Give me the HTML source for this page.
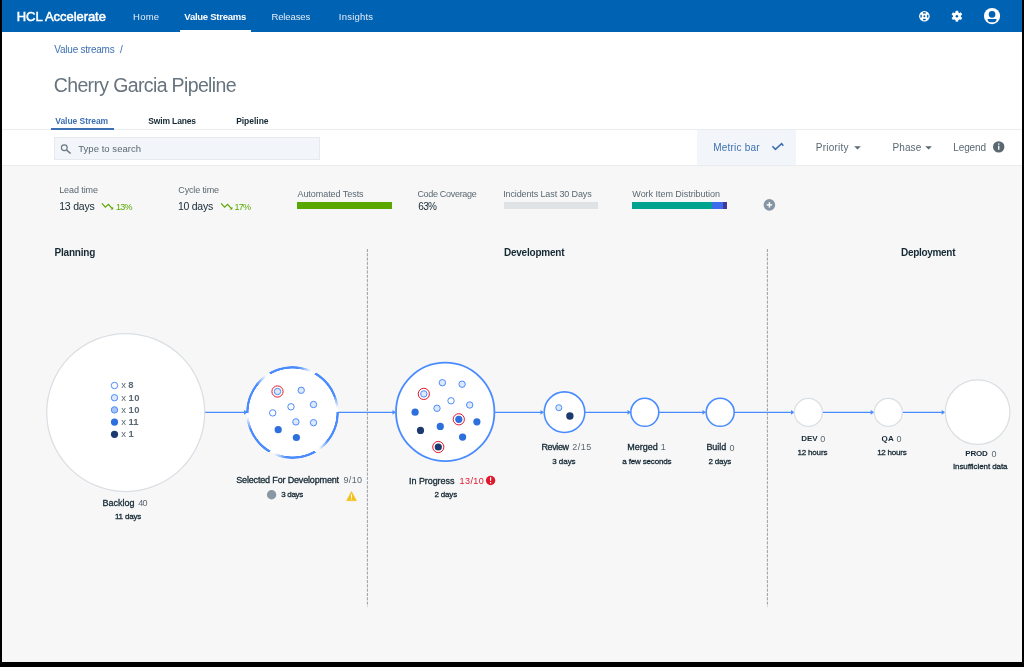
<!DOCTYPE html>
<html><head><meta charset="utf-8"><style>
html,body{margin:0;padding:0;}
body{width:1024px;height:667px;background:#000;position:relative;overflow:hidden;font-family:"Liberation Sans", sans-serif;}
#app{position:absolute;left:2px;top:0;width:1020px;height:662px;background:#f7f7f7;}
.t{position:absolute;white-space:nowrap;line-height:1;}
.a{position:absolute;}
</style></head><body>
<div id="app"></div>
<div class="a" style="left:2px;top:0;width:1020px;height:32px;background:#0062b3"></div>
<div class="a" style="left:180px;top:30px;width:71px;height:2px;background:#fff"></div>
<div class="a" style="left:2px;top:32px;width:1020px;height:133px;background:#fff"></div>
<div class="a" style="left:2px;top:129px;width:1020px;height:1px;background:#eaedf0"></div>
<div class="a" style="left:51px;top:128px;width:63px;height:2px;background:#3d70b2"></div>
<div class="a" style="left:2px;top:165px;width:1020px;height:1px;background:#eaedf0"></div>
<div class="a" style="left:54px;top:137px;width:264px;height:21px;background:#f2f5f9;border:1px solid #e6e9ed"></div>
<div class="a" style="left:697px;top:130px;width:99px;height:35px;background:#f2f5f9"></div>
<div class="a" style="left:297px;top:202px;width:95px;height:7px;background:#5aa700"></div>
<div class="a" style="left:504px;top:202px;width:94px;height:7px;background:#dfe3e6"></div>
<div class="a" style="left:632px;top:202px;width:80px;height:7px;background:#00a38d"></div>
<div class="a" style="left:712px;top:202px;width:11px;height:7px;background:#3d6beb"></div>
<div class="a" style="left:723px;top:202px;width:4px;height:7px;background:#44389a"></div>
<svg class="a" style="left:0;top:0" width="1024" height="667" viewBox="0 0 1024 667"><line x1="205" y1="412.3" x2="244.5" y2="412.3" stroke="#4a8cff" stroke-width="1.3"/><path d="M244.0 409.90000000000003 L247.5 412.3 L244.0 414.7 Z" fill="#4a8cff"/><line x1="337.5" y1="412.3" x2="393" y2="412.3" stroke="#4a8cff" stroke-width="1.3"/><path d="M392.5 409.90000000000003 L396 412.3 L392.5 414.7 Z" fill="#4a8cff"/><line x1="495" y1="412.3" x2="541" y2="412.3" stroke="#4a8cff" stroke-width="1.3"/><path d="M540.5 409.90000000000003 L544 412.3 L540.5 414.7 Z" fill="#4a8cff"/><line x1="585" y1="412.3" x2="628" y2="412.3" stroke="#4a8cff" stroke-width="1.3"/><path d="M627.5 409.90000000000003 L631 412.3 L627.5 414.7 Z" fill="#4a8cff"/><line x1="659" y1="412.3" x2="703" y2="412.3" stroke="#4a8cff" stroke-width="1.3"/><path d="M702.5 409.90000000000003 L706 412.3 L702.5 414.7 Z" fill="#4a8cff"/><line x1="734.4" y1="412.3" x2="791.5" y2="412.3" stroke="#4a8cff" stroke-width="1.3"/><path d="M791.0 409.90000000000003 L794.5 412.3 L791.0 414.7 Z" fill="#4a8cff"/><line x1="822.2" y1="412.3" x2="871.2" y2="412.3" stroke="#4a8cff" stroke-width="1.3"/><path d="M870.7 409.90000000000003 L874.2 412.3 L870.7 414.7 Z" fill="#4a8cff"/><line x1="902.3" y1="412.3" x2="942.2" y2="412.3" stroke="#4a8cff" stroke-width="1.3"/><path d="M941.7 409.90000000000003 L945.2 412.3 L941.7 414.7 Z" fill="#4a8cff"/><line x1="367.4" y1="249" x2="367.4" y2="606.5" stroke="#979ea4" stroke-width="1" stroke-dasharray="3 1.3"/><line x1="767.4" y1="249" x2="767.4" y2="606.5" stroke="#979ea4" stroke-width="1" stroke-dasharray="3 1.3"/><circle cx="125.7" cy="412.5" r="79" fill="#fff" stroke="#dadfe4" stroke-width="1.25"/><circle cx="808.4" cy="412.4" r="14" fill="#fff" stroke="#dadfe4" stroke-width="1.25"/><circle cx="888.3" cy="412.4" r="14" fill="#fff" stroke="#dadfe4" stroke-width="1.25"/><circle cx="977.6" cy="412.1" r="32.3" fill="#fff" stroke="#dadfe4" stroke-width="1.25"/><circle cx="445.2" cy="411.9" r="49.2" fill="#fff" stroke="#4a8cff" stroke-width="1.8"/><circle cx="564.5" cy="412.2" r="20.3" fill="#fff" stroke="#4a8cff" stroke-width="1.6"/><circle cx="644.8" cy="412.3" r="14" fill="#fff" stroke="#4a8cff" stroke-width="1.6"/><circle cx="720.2" cy="412.3" r="14" fill="#fff" stroke="#4a8cff" stroke-width="1.6"/><circle cx="292.5" cy="412.2" r="45.5" fill="#fff"/><circle cx="114.5" cy="385.5" r="3.2" fill="#fff" stroke="#4a8cff" stroke-width="1"/><circle cx="114.5" cy="397.7" r="3.2" fill="#dde8fa" stroke="#4a8cff" stroke-width="1"/><circle cx="114.5" cy="409.9" r="3.2" fill="#a9c3f5" stroke="#4a8cff" stroke-width="1"/><circle cx="114.5" cy="422.1" r="3.6" fill="#2d6fdd"/><circle cx="114.5" cy="434.3" r="3.6" fill="#1d3a70"/><circle cx="277.5" cy="391.5" r="3.2" fill="#dde8fa" stroke="#4a8cff" stroke-width="1"/><circle cx="277.5" cy="391.5" r="5.6" fill="none" stroke="#e0182d" stroke-width="1"/><circle cx="301.2" cy="390.3" r="3.2" fill="#dde8fa" stroke="#4a8cff" stroke-width="1"/><circle cx="313.5" cy="404.5" r="3.2" fill="#dde8fa" stroke="#4a8cff" stroke-width="1"/><circle cx="291" cy="406.8" r="3.2" fill="#fff" stroke="#4a8cff" stroke-width="1"/><circle cx="272.7" cy="412.9" r="3.2" fill="#fff" stroke="#4a8cff" stroke-width="1"/><circle cx="295.9" cy="421.9" r="3.2" fill="#dde8fa" stroke="#4a8cff" stroke-width="1"/><circle cx="313.5" cy="422.7" r="3.2" fill="#dde8fa" stroke="#4a8cff" stroke-width="1"/><circle cx="278.2" cy="429.7" r="3.6" fill="#2d6fdd"/><circle cx="296.4" cy="437.5" r="3.6" fill="#2d6fdd"/><circle cx="442.4" cy="382.7" r="3.2" fill="#dde8fa" stroke="#4a8cff" stroke-width="1"/><circle cx="462.1" cy="384.2" r="3.2" fill="#dde8fa" stroke="#4a8cff" stroke-width="1"/><circle cx="423.8" cy="393.9" r="3.2" fill="#dde8fa" stroke="#4a8cff" stroke-width="1"/><circle cx="423.8" cy="393.9" r="5.6" fill="none" stroke="#e0182d" stroke-width="1"/><circle cx="451" cy="400.8" r="3.2" fill="#fff" stroke="#4a8cff" stroke-width="1"/><circle cx="469.7" cy="405" r="3.2" fill="#dde8fa" stroke="#4a8cff" stroke-width="1"/><circle cx="437" cy="408.3" r="3.2" fill="#dde8fa" stroke="#4a8cff" stroke-width="1"/><circle cx="415.1" cy="412.2" r="3.6" fill="#2d6fdd"/><circle cx="458.8" cy="419.3" r="3.6" fill="#2d6fdd"/><circle cx="458.8" cy="419.3" r="5.6" fill="none" stroke="#e0182d" stroke-width="1"/><circle cx="476.9" cy="421.8" r="3.6" fill="#2d6fdd"/><circle cx="420.5" cy="430.4" r="3.6" fill="#1d3a70"/><circle cx="440.3" cy="426.4" r="3.6" fill="#2d6fdd"/><circle cx="462.6" cy="437.1" r="3.6" fill="#2d6fdd"/><circle cx="438.3" cy="447" r="3.6" fill="#1d3a70"/><circle cx="438.3" cy="447" r="5.6" fill="none" stroke="#e0182d" stroke-width="1"/><circle cx="558.8" cy="407.7" r="3.0" fill="#dde8fa" stroke="#4a8cff" stroke-width="1"/><circle cx="569.9" cy="416" r="3.6999999999999997" fill="#1d3a70"/></svg>
<svg class="a" style="left:914px;top:6px" width="22" height="22" viewBox="914 6 22 22"><circle cx="924.4" cy="16.2" r="5.3" fill="#fff"/><circle cx="924.4" cy="16.2" r="1.0" fill="#0062b3"/><rect x="923.0" y="12.2" width="2.8" height="1.35" fill="#0062b3"/><rect x="923.0" y="18.849999999999998" width="2.8" height="1.35" fill="#0062b3"/><rect x="920.4" y="14.799999999999999" width="1.35" height="2.8" fill="#0062b3"/><rect x="927.05" y="14.799999999999999" width="1.35" height="2.8" fill="#0062b3"/></svg>
<svg class="a" style="left:946px;top:6px" width="22" height="22" viewBox="946 6 22 22"><circle cx="956.9" cy="16.2" r="3.9" fill="#fff"/><rect x="955.55" y="10.799999999999999" width="2.7" height="3" fill="#fff" transform="rotate(0 956.9 16.2)"/><rect x="955.55" y="10.799999999999999" width="2.7" height="3" fill="#fff" transform="rotate(60 956.9 16.2)"/><rect x="955.55" y="10.799999999999999" width="2.7" height="3" fill="#fff" transform="rotate(120 956.9 16.2)"/><rect x="955.55" y="10.799999999999999" width="2.7" height="3" fill="#fff" transform="rotate(180 956.9 16.2)"/><rect x="955.55" y="10.799999999999999" width="2.7" height="3" fill="#fff" transform="rotate(240 956.9 16.2)"/><rect x="955.55" y="10.799999999999999" width="2.7" height="3" fill="#fff" transform="rotate(300 956.9 16.2)"/><circle cx="956.9" cy="16.2" r="1.25" fill="#0062b3"/></svg>
<svg class="a" style="left:982px;top:6px" width="22" height="22" viewBox="982 6 22 22"><circle cx="992.05" cy="16.05" r="8.1" fill="#fff"/><circle cx="992.05" cy="14.4" r="3.3" fill="#0062b3"/><path d="M987.6 19.0 H996.5 V19.4 A4.45 2.9 0 0 1 987.6 19.4 Z" fill="#0062b3"/></svg>
<svg class="a" style="left:58px;top:141px" width="16" height="16" viewBox="58 141 16 16"><circle cx="64.3" cy="147.7" r="2.9" fill="none" stroke="#6a7781" stroke-width="1.15"/><path d="M66.6 150.1 L70.6 153.5" stroke="#6a7781" stroke-width="1.5"/></svg>
<svg class="a" style="left:768px;top:138px" width="20" height="16" viewBox="768 138 20 16"><path d="M772.4 146.2 L775.4 149.4 L781.6 143.6 L783.3 145.8" fill="none" stroke="#3d70b2" stroke-width="1.6" stroke-linejoin="miter"/></svg>
<svg class="a" style="left:850px;top:142px" width="16" height="10" viewBox="850 142 16 10"><path d="M854.2 146.3 H860.8000000000001 L857.5 149.6 Z" fill="#5a6872"/></svg>
<svg class="a" style="left:921px;top:142px" width="16" height="10" viewBox="921 142 16 10"><path d="M925.3 146.3 H931.9 L928.5999999999999 149.6 Z" fill="#5a6872"/></svg>
<svg class="a" style="left:990px;top:139px" width="18" height="16" viewBox="990 139 18 16"><circle cx="998.7" cy="146.9" r="5.7" fill="#5a6872"/><rect x="998.1" y="145.7" width="1.3" height="4" fill="#fff"/><rect x="998.1" y="143.4" width="1.3" height="1.3" fill="#fff"/></svg>
<svg class="a" style="left:100px;top:200px" width="16" height="12" viewBox="100 200 16 12"><path d="M101.9 203.3 L105.4 207.1 L108.4 204.4 L111.8 208.2" fill="none" stroke="#5aa700" stroke-width="1.2"/><path d="M113.2 206.8 V209.4 H110.4 Z" fill="#5aa700"/></svg>
<svg class="a" style="left:219px;top:200px" width="16" height="12" viewBox="219 200 16 12"><path d="M221.10000000000002 203.3 L224.60000000000002 207.1 L227.60000000000002 204.4 L231.0 208.2" fill="none" stroke="#5aa700" stroke-width="1.2"/><path d="M232.4 206.8 V209.4 H229.60000000000002 Z" fill="#5aa700"/></svg>
<svg class="a" style="left:762px;top:198px" width="15" height="14" viewBox="762 198 15 14"><circle cx="769.4" cy="204.9" r="5.8" fill="#8595a3"/><rect x="766.7" y="204.2" width="5.4" height="1.4" fill="#fff"/><rect x="768.7" y="202.2" width="1.4" height="5.4" fill="#fff"/></svg>
<svg class="a" style="left:265px;top:488px" width="14" height="14" viewBox="265 488 14 14"><circle cx="271.6" cy="494.8" r="4.7" fill="#8897a4"/></svg>
<svg class="a" style="left:344px;top:489px" width="15" height="14" viewBox="344 489 15 14"><path d="M351.5 491.5 L356.4 500.7 H346.6 Z" fill="#f1c21b" stroke="#f1c21b" stroke-width="0.6" stroke-linejoin="round"/><rect x="351" y="494.3" width="1" height="3.6" fill="#fff"/><rect x="351" y="498.6" width="1" height="1" fill="#fff"/></svg>
<svg class="a" style="left:484px;top:474px" width="14" height="14" viewBox="484 474 14 14"><circle cx="490.6" cy="480.5" r="4.7" fill="#e0182d"/><rect x="490" y="477.2" width="1.2" height="3.6" fill="#fff"/><rect x="490" y="482" width="1.2" height="1.3" fill="#fff"/></svg>
<div class="a" style="left:246px;top:365.7px;width:93px;height:93px;border-radius:50%;background:repeating-conic-gradient(from 30deg, #4a8cff 0deg 38deg, rgba(74,140,255,0) 54deg 60deg);-webkit-mask:radial-gradient(circle, transparent 43.7px, #000 44.2px, #000 46.5px, transparent 47px);mask:radial-gradient(circle, transparent 43.7px, #000 44.2px, #000 46.5px, transparent 47px)"></div>
<div id="tw" class="a" style="left:0;top:0;width:1024px;height:667px;will-change:transform"><div class="t" id="t0" style="left:16.78px;top:10.10px;font-size:13px;font-weight:400;-webkit-text-stroke:0.5px #ffffff;color:#ffffff;letter-spacing:-0.055px">HCL Accelerate</div><div class="t" id="t1" style="left:133.08px;top:11.96px;font-size:9.5px;font-weight:400;color:#e8eef7;letter-spacing:0.238px">Home</div><div class="t" id="t2" style="left:184.33px;top:11.96px;font-size:9.5px;font-weight:700;color:#ffffff;letter-spacing:-0.253px">Value Streams</div><div class="t" id="t3" style="left:271.40px;top:11.96px;font-size:9.5px;font-weight:400;color:#e8eef7;letter-spacing:-0.100px">Releases</div><div class="t" id="t4" style="left:338.78px;top:11.96px;font-size:9.5px;font-weight:400;color:#e8eef7;letter-spacing:0.231px">Insights</div><div class="t" id="t5" style="left:54.27px;top:44.53px;font-size:10px;font-weight:400;color:#3d70b2;letter-spacing:-0.226px">Value streams</div><div class="t" id="t6" style="left:120.10px;top:44.53px;font-size:10px;font-weight:400;color:#3d70b2;letter-spacing:0.000px">/</div><div class="t" id="t7" style="left:53.74px;top:75.99px;font-size:19.5px;font-weight:400;color:#67747e;letter-spacing:-0.635px">Cherry Garcia Pipeline</div><div class="t" id="t8" style="left:55.27px;top:116.60px;font-size:8.5px;font-weight:700;color:#3d70b2;letter-spacing:-0.044px">Value Stream</div><div class="t" id="t9" style="left:148.33px;top:116.60px;font-size:8.5px;font-weight:700;color:#152935;letter-spacing:-0.154px">Swim Lanes</div><div class="t" id="t10" style="left:236.17px;top:116.60px;font-size:8.5px;font-weight:700;color:#152935;letter-spacing:-0.034px">Pipeline</div><div class="t" id="t11" style="left:78.27px;top:143.66px;font-size:9.5px;font-weight:400;color:#5a6872;letter-spacing:0.037px">Type to search</div><div class="t" id="t12" style="left:713.19px;top:142.53px;font-size:10px;font-weight:400;color:#3d70b2;letter-spacing:0.208px">Metric bar</div><div class="t" id="t13" style="left:815.78px;top:142.53px;font-size:10px;font-weight:400;color:#5a6872;letter-spacing:0.232px">Priority</div><div class="t" id="t14" style="left:892.61px;top:142.53px;font-size:10px;font-weight:400;color:#5a6872;letter-spacing:0.056px">Phase</div><div class="t" id="t15" style="left:953.19px;top:142.53px;font-size:10px;font-weight:400;color:#5a6872;letter-spacing:-0.089px">Legend</div><div class="t" id="t16" style="left:59.19px;top:186.18px;font-size:9px;font-weight:400;color:#5a6872;letter-spacing:-0.087px">Lead time</div><div class="t" id="t17" style="left:59.19px;top:200.61px;font-size:10.5px;font-weight:400;color:#152935;letter-spacing:-0.192px">13 days</div><div class="t" id="t18" style="left:115.88px;top:203.08px;font-size:9px;font-weight:400;color:#5aa700;letter-spacing:-0.740px">13%</div><div class="t" id="t19" style="left:178.27px;top:186.18px;font-size:9px;font-weight:400;color:#5a6872;letter-spacing:-0.132px">Cycle time</div><div class="t" id="t20" style="left:178.02px;top:200.61px;font-size:10.5px;font-weight:400;color:#152935;letter-spacing:-0.271px">10 days</div><div class="t" id="t21" style="left:234.40px;top:203.08px;font-size:9px;font-weight:400;color:#5aa700;letter-spacing:-0.700px">17%</div><div class="t" id="t22" style="left:297.44px;top:190.38px;font-size:9px;font-weight:400;color:#5a6872;letter-spacing:-0.050px">Automated Tests</div><div class="t" id="t23" style="left:417.40px;top:190.38px;font-size:9px;font-weight:400;color:#5a6872;letter-spacing:-0.310px">Code Coverage</div><div class="t" id="t24" style="left:418.17px;top:202.23px;font-size:10px;font-weight:400;color:#152935;letter-spacing:-0.585px">63%</div><div class="t" id="t25" style="left:503.19px;top:190.38px;font-size:9px;font-weight:400;color:#5a6872;letter-spacing:-0.122px">Incidents Last 30 Days</div><div class="t" id="t26" style="left:632.34px;top:190.38px;font-size:9px;font-weight:400;color:#5a6872;letter-spacing:-0.034px">Work Item Distribution</div><div class="t" id="t27" style="left:54.51px;top:247.53px;font-size:10px;font-weight:700;color:#152935;letter-spacing:-0.201px">Planning</div><div class="t" id="t28" style="left:503.92px;top:247.53px;font-size:10px;font-weight:700;color:#152935;letter-spacing:-0.210px">Development</div><div class="t" id="t29" style="left:901.02px;top:247.53px;font-size:10px;font-weight:700;color:#152935;letter-spacing:-0.309px">Deployment</div><div class="t" id="t30" style="left:102.40px;top:498.78px;font-size:9px;font-weight:400;-webkit-text-stroke:0.3px #152935;color:#152935;letter-spacing:0.001px">Backlog</div><div class="t" id="t31" style="left:138.20px;top:498.78px;font-size:9px;font-weight:400;color:#5a6872;letter-spacing:-0.705px">40</div><div class="t" id="t32" style="left:114.95px;top:513.03px;font-size:8px;font-weight:400;-webkit-text-stroke:0.3px #152935;color:#152935;letter-spacing:-0.192px">11 days</div><div class="t" id="t33" style="left:236.23px;top:475.68px;font-size:9px;font-weight:400;-webkit-text-stroke:0.3px #152935;color:#152935;letter-spacing:-0.161px">Selected For Development</div><div class="t" id="t34" style="left:343.44px;top:475.68px;font-size:9px;font-weight:400;color:#5a6872;letter-spacing:0.387px">9/10</div><div class="t" id="t35" style="left:281.17px;top:490.53px;font-size:8px;font-weight:400;-webkit-text-stroke:0.3px #152935;color:#152935;letter-spacing:-0.282px">3 days</div><div class="t" id="t36" style="left:409.08px;top:477.28px;font-size:9px;font-weight:400;-webkit-text-stroke:0.3px #152935;color:#152935;letter-spacing:-0.068px">In Progress</div><div class="t" id="t37" style="left:459.61px;top:477.28px;font-size:9px;font-weight:400;color:#e0182d;letter-spacing:0.401px">13/10</div><div class="t" id="t38" style="left:434.54px;top:491.03px;font-size:8px;font-weight:400;-webkit-text-stroke:0.3px #152935;color:#152935;letter-spacing:-0.189px">2 days</div><div class="t" id="t39" style="left:541.44px;top:443.38px;font-size:9px;font-weight:400;-webkit-text-stroke:0.3px #152935;color:#152935;letter-spacing:-0.371px">Review</div><div class="t" id="t40" style="left:572.29px;top:443.38px;font-size:9px;font-weight:400;color:#5a6872;letter-spacing:0.468px">2/15</div><div class="t" id="t41" style="left:552.29px;top:458.03px;font-size:8px;font-weight:400;-webkit-text-stroke:0.3px #152935;color:#152935;letter-spacing:-0.047px">3 days</div><div class="t" id="t42" style="left:627.34px;top:443.38px;font-size:9px;font-weight:400;-webkit-text-stroke:0.3px #152935;color:#152935;letter-spacing:0.001px">Merged</div><div class="t" id="t43" style="left:660.67px;top:443.38px;font-size:9px;font-weight:400;color:#5a6872;letter-spacing:0.000px">1</div><div class="t" id="t44" style="left:622.27px;top:458.23px;font-size:8px;font-weight:400;-webkit-text-stroke:0.3px #152935;color:#152935;letter-spacing:-0.155px">a few seconds</div><div class="t" id="t45" style="left:706.39px;top:443.28px;font-size:9px;font-weight:400;-webkit-text-stroke:0.3px #152935;color:#152935;letter-spacing:-0.059px">Build</div><div class="t" id="t46" style="left:729.38px;top:443.98px;font-size:9px;font-weight:400;color:#5a6872;letter-spacing:0.000px">0</div><div class="t" id="t47" style="left:708.40px;top:458.13px;font-size:8px;font-weight:400;-webkit-text-stroke:0.3px #152935;color:#152935;letter-spacing:-0.139px">2 days</div><div class="t" id="t48" style="left:801.23px;top:434.63px;font-size:8px;font-weight:700;color:#152935;letter-spacing:0.000px">DEV</div><div class="t" id="t49" style="left:820.34px;top:434.58px;font-size:9px;font-weight:400;color:#5a6872;letter-spacing:0.000px">0</div><div class="t" id="t50" style="left:797.44px;top:449.23px;font-size:8px;font-weight:400;-webkit-text-stroke:0.3px #152935;color:#152935;letter-spacing:-0.169px">12 hours</div><div class="t" id="t51" style="left:881.54px;top:434.63px;font-size:8px;font-weight:700;color:#152935;letter-spacing:0.180px">QA</div><div class="t" id="t52" style="left:896.54px;top:434.58px;font-size:9px;font-weight:400;color:#5a6872;letter-spacing:0.000px">0</div><div class="t" id="t53" style="left:877.16px;top:449.23px;font-size:8px;font-weight:400;-webkit-text-stroke:0.3px #152935;color:#152935;letter-spacing:-0.231px">12 hours</div><div class="t" id="t54" style="left:965.29px;top:450.13px;font-size:8px;font-weight:700;color:#152935;letter-spacing:-0.210px">PROD</div><div class="t" id="t55" style="left:991.54px;top:450.08px;font-size:9px;font-weight:400;color:#5a6872;letter-spacing:0.000px">0</div><div class="t" id="t56" style="left:952.96px;top:463.13px;font-size:8px;font-weight:400;-webkit-text-stroke:0.3px #152935;color:#152935;letter-spacing:-0.085px">Insufficient data</div><div class="t" id="t57" style="left:121.23px;top:380.36px;font-size:9.5px;font-weight:400;color:#5a6872;letter-spacing:0.000px">x</div><div class="t" id="t58" style="left:128.23px;top:380.36px;font-size:9.5px;font-weight:700;color:#5a6872;letter-spacing:0.000px">8</div><div class="t" id="t59" style="left:121.23px;top:392.51px;font-size:9.5px;font-weight:400;color:#5a6872;letter-spacing:0.000px">x</div><div class="t" id="t60" style="left:128.40px;top:392.51px;font-size:9.5px;font-weight:700;color:#5a6872;letter-spacing:0.470px">10</div><div class="t" id="t61" style="left:121.23px;top:404.66px;font-size:9.5px;font-weight:400;color:#5a6872;letter-spacing:0.000px">x</div><div class="t" id="t62" style="left:128.40px;top:404.66px;font-size:9.5px;font-weight:700;color:#5a6872;letter-spacing:0.470px">10</div><div class="t" id="t63" style="left:121.23px;top:416.81px;font-size:9.5px;font-weight:400;color:#5a6872;letter-spacing:0.000px">x</div><div class="t" id="t64" style="left:128.40px;top:416.81px;font-size:9.5px;font-weight:700;color:#5a6872;letter-spacing:0.110px">11</div><div class="t" id="t65" style="left:121.23px;top:428.96px;font-size:9.5px;font-weight:400;color:#5a6872;letter-spacing:0.000px">x</div><div class="t" id="t66" style="left:128.40px;top:428.96px;font-size:9.5px;font-weight:700;color:#5a6872;letter-spacing:0.000px">1</div></div>
</body></html>
